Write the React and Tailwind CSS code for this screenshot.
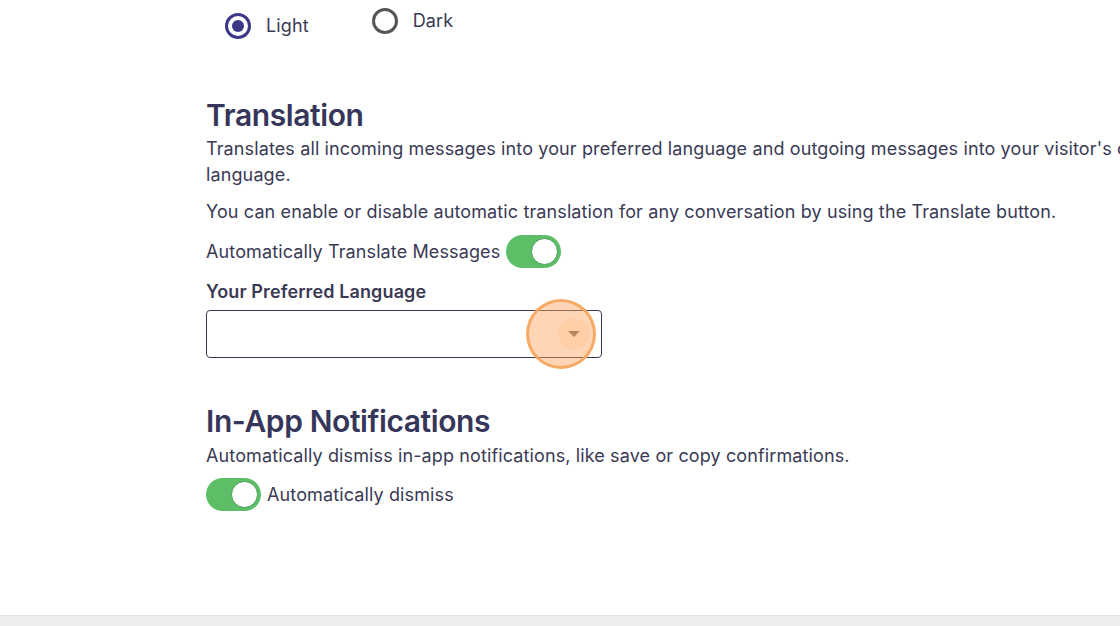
import { useState } from 'react'

function Toggle({ on, onClick }) {
  return (
    <button onClick={onClick}
      className={`relative w-[55px] h-[33px] rounded-full shrink-0 transition-colors ${on ? 'bg-[#5cbf68]' : 'bg-gray-300'}`}>
      <span className={`absolute top-[3px] w-[27px] h-[27px] rounded-full bg-white border border-[#4a9a55] transition-all ${on ? 'left-[25px]' : 'left-[3px]'}`} />
    </button>
  )
}

function Radio({ checked, label, onClick, className = '' }) {
  return (
    <label onClick={onClick} className={`flex items-center gap-[15px] cursor-pointer ${className}`}>
      <span className={`w-[26px] h-[26px] rounded-full border-[3px] flex items-center justify-center ${checked ? 'border-[#3b3887]' : 'border-[#555555]'}`}>
        {checked && <span className="w-[12px] h-[12px] rounded-full bg-[#3b3887]" />}
      </span>
      <span className="text-[18px] text-[#3a3a55]">{label}</span>
    </label>
  )
}

export default function App() {
  const [theme, setTheme] = useState('light')
  const [translate, setTranslate] = useState(true)
  const [dismiss, setDismiss] = useState(true)

  return (
    <div className="w-[1120px] h-[626px] overflow-hidden bg-white flex flex-col text-[#3a3a55] tracking-[0.12px]"
      style={{ fontFamily: 'Inter, "Noto Sans", sans-serif' }}>
      <div className="flex-1 pl-[206px]">
        <div className="w-[960px]">
          <div className="flex items-start pl-[19px] gap-[63px]">
            <Radio checked={theme === 'light'} label="Light" onClick={() => setTheme('light')} className="mt-[12px]" />
            <Radio checked={theme === 'dark'} label="Dark" onClick={() => setTheme('dark')} className="mt-[7px]" />
          </div>

          <h2 className="mt-[58px] mb-[3px] text-[30px] font-semibold leading-[36px] tracking-[-0.4px] text-[#36365a]">Translation</h2>
          <p className="text-[18px] leading-[26px]">
            Translates all incoming messages into your preferred language and outgoing messages into your visitor's own language.
          </p>
          <p className="mt-[11px] text-[18px] leading-[26px]">
            You can enable or disable automatic translation for any conversation by using the Translate button.
          </p>
          <div className="mt-[10px] flex items-center gap-[6px]">
            <span className="text-[18px]">Automatically Translate Messages</span>
            <Toggle on={translate} onClick={() => setTranslate(!translate)} />
          </div>
          <div className="mt-[11px] text-[18px] font-semibold leading-[26px]">Your Preferred Language</div>
          <div className="relative mt-[5px] w-[396px] h-[48px] border border-[#3a3a55] rounded-[4px] flex items-center justify-end pr-[21px]">
            <span className="w-0 h-0 border-l-[6px] border-r-[6px] border-t-[6px] border-l-transparent border-r-transparent border-t-[#666666]" />
            <span className="absolute left-[319px] top-[-12px] w-[70px] h-[70px] rounded-full bg-[#ffa45c]/45 border-[3px] border-[#f5a55c]/90" />
            <span className="absolute left-[351px] top-[7px] w-[32px] h-[32px] rounded-full bg-[#ffa45c]/15" />
          </div>

          <h2 className="mt-[45px] mb-[4px] text-[30px] font-semibold leading-[36px] tracking-[-0.4px] text-[#36365a]">In-App Notifications</h2>
          <p className="text-[18px] leading-[26px]">
            Automatically dismiss in-app notifications, like save or copy confirmations.
          </p>
          <div className="mt-[9px] flex items-center gap-[6px]">
            <Toggle on={dismiss} onClick={() => setDismiss(!dismiss)} />
            <span className="text-[18px]">Automatically dismiss</span>
          </div>
        </div>
      </div>
      <div className="h-[11px] bg-[#ededed] border-t border-[#e4e4e4]" />
    </div>
  )
}
